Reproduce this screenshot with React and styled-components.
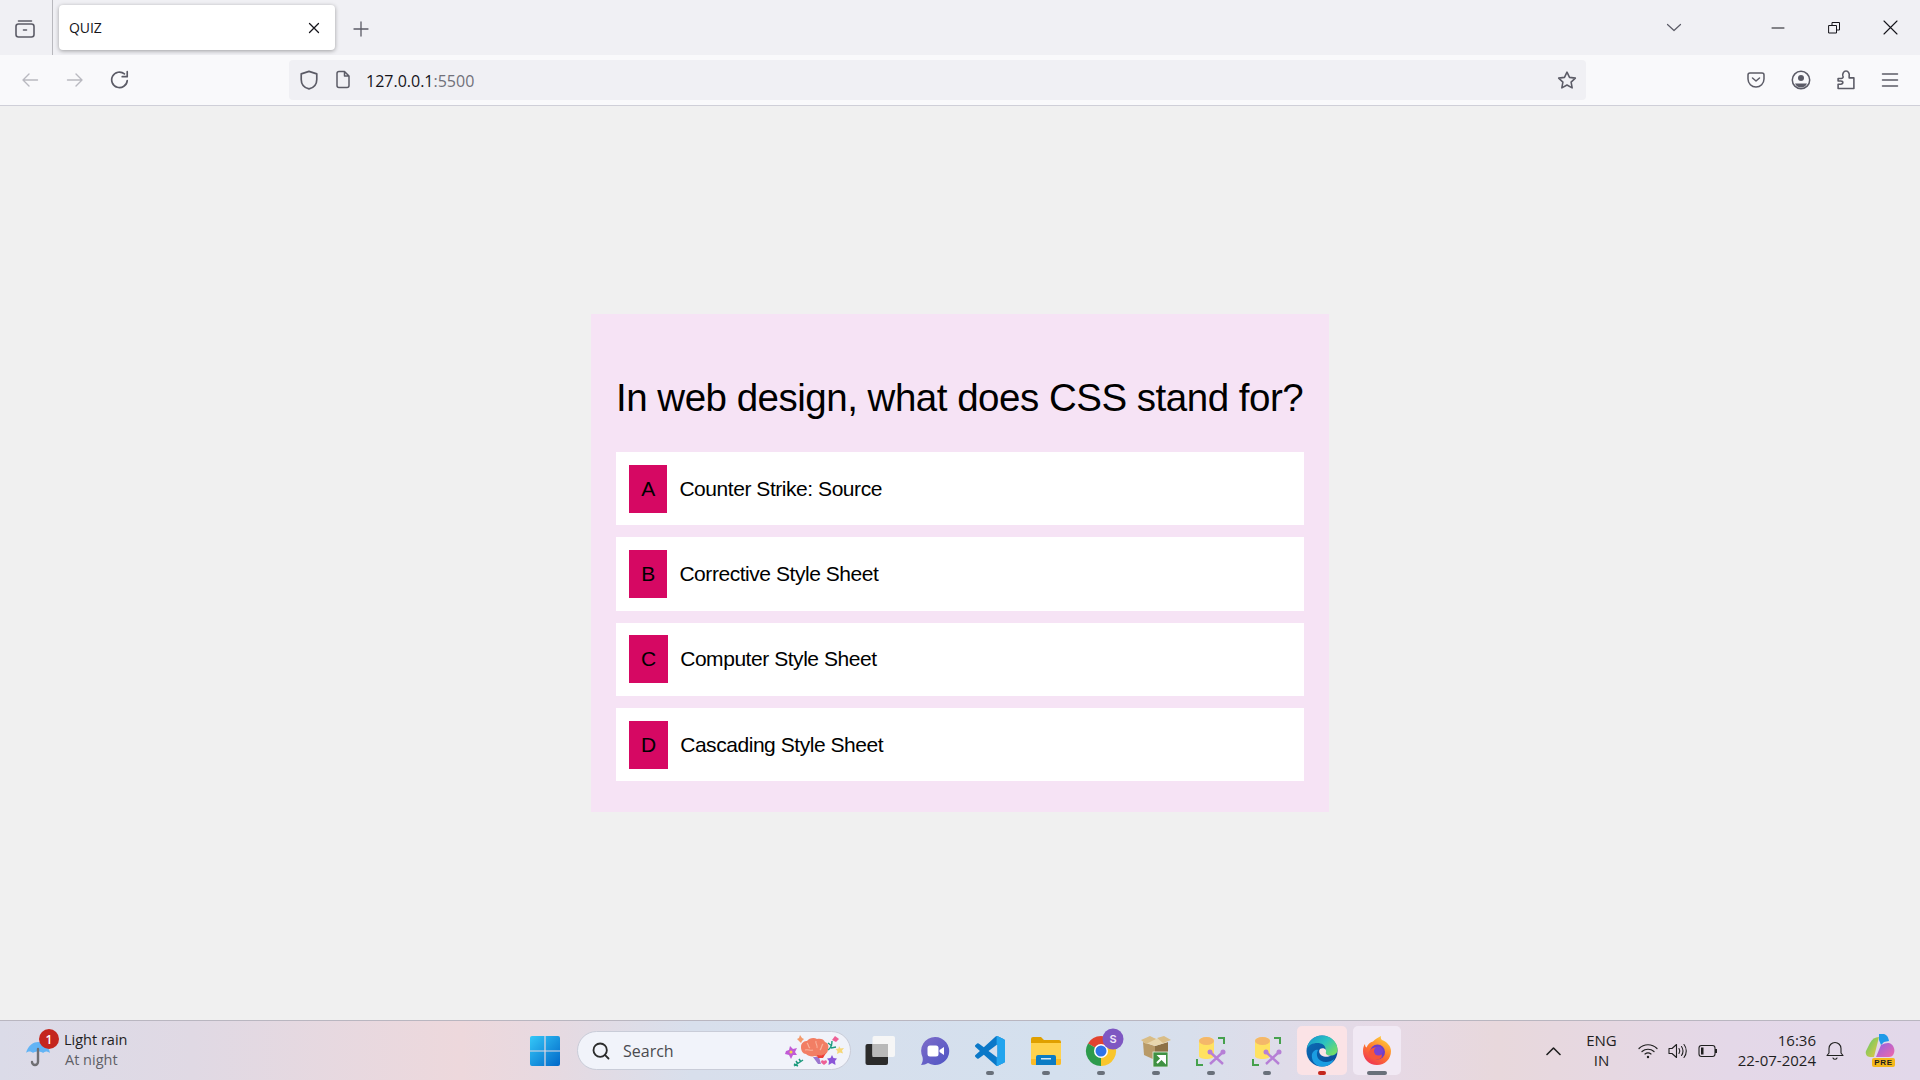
import React from "react";
import styled, { createGlobalStyle } from "styled-components";
import { Search as SearchIcon } from "lucide-react";

const GlobalStyle = createGlobalStyle`
  html, body { margin: 0; padding: 0; height: 100%; overflow: hidden; }
  body { font-family: "Liberation Sans", Arial, sans-serif; background: #f0f0f0; }
  #root { height: 100%; }
`;

const options = [
  { letter: "A", text: "Counter Strike: Source" },
  { letter: "B", text: "Corrective Style Sheet" },
  { letter: "C", text: "Computer Style Sheet" },
  { letter: "D", text: "Cascading Style Sheet" },
];

function Line({ d, w = 16, h = 16, vb = "0 0 16 16", color = "#5b5b66", sw = 1.4 }) {
  return (
    <svg width={w} height={h} viewBox={vb} fill="none" stroke={color} strokeWidth={sw} strokeLinecap="round" strokeLinejoin="round">
      <path d={d} />
    </svg>
  );
}

const WeatherIcon = () => (
  <svg width="26" height="32" viewBox="0 0 26 32">
    <path d="M1 17 C3 9 9 6 13 6 C18 6 24 10 25 17 C22 15 20 15 18 17 C16 15 10 15 8 17 C6 15 3 15 1 17Z" fill="#62b4f5" />
    <path d="M13 13v13a3 3 0 0 1-6 0" fill="none" stroke="#6f6f73" strokeWidth="2.4" strokeLinecap="round" />
  </svg>
);

const WinLogo = () => (
  <svg width="30" height="30" viewBox="0 0 30 30">
    <defs>
      <linearGradient id="winGrad" x1="0" y1="0" x2="1" y2="1">
        <stop offset="0" stopColor="#35c8f8" />
        <stop offset="1" stopColor="#0067c8" />
      </linearGradient>
    </defs>
    <path d="M0 2a2 2 0 0 1 2-2h12.4v14.4H0zM15.6 0H28a2 2 0 0 1 2 2v12.4H15.6zM0 15.6h14.4V30H2a2 2 0 0 1-2-2zM15.6 15.6H30V28a2 2 0 0 1-2 2H15.6z" fill="url(#winGrad)" />
  </svg>
);

const BrainArt = () => (
  <svg width="62" height="32" viewBox="0 0 62 32">
    <path d="M1 16l3-1 1-4 3 3 4-1-2 4 2 3-4 0-2 4-2-4-4-1z" fill="#c15ad6" />
    <circle cx="6" cy="17" r="1.500" fill="#f5d54a" />
    <path d="M9 31l9-6M11 26l2 3M14 24l2 3M9 29l4 2" stroke="#1c9a7d" strokeWidth="1.500" fill="none" />
    <path d="M12 4l2-1 1-3 2 3 2 1-2 2-1 2-2-2z" fill="#f39a6c" />
    <path d="M16 12c0-5 4-6 6-6 2-3 7-4 10-2 3-1 7 0 8 3 3 1 4 4 3 7 0 4-3 6-6 6-2 2-5 2-7 1-3 1-7 0-9-2-3 0-5-3-5-7z" fill="#f27e64" />
    <path d="M22 8c2 2 1 4 3 5M31 6c-1 3 2 4 1 7M38 9c-2 2-1 4-3 6M20 15c3-1 5 1 8 0" stroke="#f9b29c" strokeWidth="1.100" fill="none" />
    <path d="M28 22l6 0 2 7-3 0z" fill="#9c76cf" />
    <path d="M32 20c3 1 7 0 9-2l-3 5h-5z" fill="#ee3f37" />
    <path d="M43 15c3-2 4-5 4-9M47 11l-4-3M46 13l5-1" stroke="#1c9a7d" strokeWidth="1.400" fill="none" />
    <path d="M47 5l3-4 4 3-3 3z" fill="#ee5f95" />
    <path d="M54 11l1.500 2.500 3.500-.500-2 2.500 1 3-3-1-3 1.500.500-3-2-2 3-.500z" fill="#f6d776" />
    <path d="M47 20l1.500 3 3.500.500-2 2.500.500 4-3.500-2-3.500 2 .500-4-2-2.500 3.500-.500z" fill="#8a55d8" />
    <path d="M39 26c1-1 3-1 3 1 0 1-2 2-3 3-1-1-3-2-3-3 0-2 2-2 3-1z" fill="#ee5f95" />
  </svg>
);

const TaskViewIcon = () => (
  <svg width="30" height="29" viewBox="0 0 30 29">
    <rect x="0.500" y="8" width="22.500" height="21" rx="2" fill="#2b2b2b" />
    <rect x="7.500" y="0" width="22.500" height="21" rx="2" fill="#f6f6f6" />
    <rect x="7.500" y="8" width="15.500" height="13" fill="#b9b9b9" />
  </svg>
);

const ChatIcon = () => (
  <svg width="30" height="30" viewBox="0 0 30 30">
    <defs>
      <linearGradient id="chatGrad" x1="0" y1="0" x2="1" y2="1">
        <stop offset="0" stopColor="#7e6cc9" />
        <stop offset="1" stopColor="#4f55c4" />
      </linearGradient>
    </defs>
    <path d="M15 1a14 14 0 1 1-7 26c-2 1-4 2-7 2 2-3 2-6 1.5-8A14 14 0 0 1 15 1z" fill="url(#chatGrad)" />
    <rect x="7.500" y="9.500" width="11" height="11" rx="2.500" fill="#fff" />
    <path d="M19.500 14l4.500-3v8l-4.500-3z" fill="#fff" />
  </svg>
);

const VSCODE_PATH = "M96.461 10.796L75.857.876a6.23 6.23 0 0 0-7.107 1.207L29.484 37.884 12.37 24.9a4.16 4.16 0 0 0-5.318.237l-5.5 5a4.17 4.17 0 0 0-.004 6.167L16.4 50 1.546 63.696a4.17 4.17 0 0 0 .004 6.167l5.5 5a4.16 4.16 0 0 0 5.318.237l17.113-12.984 39.27 35.8a6.22 6.22 0 0 0 7.106 1.208l20.604-9.92A6.25 6.25 0 0 0 100 83.37V16.63a6.25 6.25 0 0 0-3.539-5.833zM75.015 72.7L45.11 50l29.905-22.7z";

const VsCodeIcon = () => (
  <svg width="30" height="30" viewBox="0 0 100 100">
    <defs>
      <clipPath id="vsPanel">
        <rect x="72" y="0" width="28" height="100" />
      </clipPath>
    </defs>
    <path d={VSCODE_PATH} fill="#0a78c8" />
    <path d={VSCODE_PATH} fill="#22a4ee" clipPath="url(#vsPanel)" />
  </svg>
);

const FolderIcon = () => (
  <svg width="30" height="28" viewBox="0 0 30 28">
    <path d="M0 2a2 2 0 0 1 2-2h8l3 3h15a2 2 0 0 1 2 2v6H0z" fill="#e0a000" />
    <path d="M0 6h30v20a2 2 0 0 1-2 2H2a2 2 0 0 1-2-2z" fill="#ffd24d" />
    <path d="M0 22h30v4a2 2 0 0 1-2 2H2a2 2 0 0 1-2-2z" fill="#fcbb25" />
    <path d="M5 20a2 2 0 0 1 2-2h16a2 2 0 0 1 2 2v8H5z" fill="#0c7cc4" />
    <rect x="10" y="21" width="10" height="1.500" fill="#d4e7f5" />
  </svg>
);

const ChromeIcon = () => (
  <svg width="46" height="46" viewBox="-8 0 46 46">
    <path d="M15 23L2 15.500A15 15 0 0 1 28 15.500z" fill="#e2432f" />
    <path d="M15 23L28 15.500A15 15 0 0 1 15 38z" fill="#f9c62c" />
    <path d="M15 23L15 38A15 15 0 0 1 2 15.500z" fill="#2d9b4c" />
    <circle cx="15" cy="23" r="7" fill="#fff" />
    <circle cx="15" cy="23" r="5.500" fill="#2f74e8" />
    <circle cx="27" cy="11" r="10.500" fill="#7e57c2" />
    <text x="27" y="15" textAnchor="middle" fontSize="11" fontFamily="Inter, sans-serif" fontWeight="600" fill="#efe6fa">S</text>
  </svg>
);

const BoxIcon = () => (
  <svg width="30" height="32" viewBox="0 0 30 32">
    <path d="M2 7l12 4v14L3 20z" fill="#b89a68" />
    <path d="M14 11l13-4v13l-13 5z" fill="#8d7145" />
    <path d="M2 7l11-4 14 4-13 4z" fill="#e9d7ad" />
    <path d="M0 5l9-4 6 3-10 5zM16 3l7-2 7 4-8 3z" fill="#d9bd86" />
    <rect x="12" y="17" width="15" height="15" fill="#3f9142" stroke="#e8efe4" strokeWidth="0.800" />
    <path d="M16 28l5-5M18 21h6v6z" stroke="#fff" strokeWidth="2" fill="#fff" />
  </svg>
);

const DbToolIcon = () => (
  <svg width="30" height="30" viewBox="0 0 30 30">
    <path d="M3 5c0-5 15-5 15 0v15c0 4-15 4-15 0z" fill="#ffe261" />
    <ellipse cx="10.500" cy="5" rx="7.500" ry="4" fill="#f4b76a" />
    <path d="M22 2h6v6M1 23v6h6" stroke="#45a14d" strokeWidth="2" fill="none" />
    <path d="M14 16l13 12M27 16L14 28" stroke="#b67fd6" strokeWidth="2.400" fill="none" />
    <circle cx="14" cy="16" r="2.500" fill="#b67fd6" />
    <circle cx="27" cy="16" r="2.500" fill="#b67fd6" />
  </svg>
);

const EdgeIcon = () => (
  <svg width="32" height="32" viewBox="0 0 32 32">
    <defs>
      <linearGradient id="edgeTop" x1="0" y1="0" x2="1" y2="0.700">
        <stop offset="0" stopColor="#1390d0" />
        <stop offset="0.550" stopColor="#2cc3c0" />
        <stop offset="1" stopColor="#6fdc6a" />
      </linearGradient>
      <linearGradient id="edgeLow" x1="0" y1="0" x2="1" y2="1">
        <stop offset="0" stopColor="#0c6fb8" />
        <stop offset="1" stopColor="#0a4a96" />
      </linearGradient>
    </defs>
    <circle cx="16" cy="16" r="15.500" fill="url(#edgeLow)" />
    <path d="M1 14C2 6 8 .500 16 .500c9 0 15.500 7 15.500 14 0 4-3 6-7 6-3 0-6-1-6-3 0-1 1-1.500 1-3.500 0-4-4-6-8-6-5 0-9 2-10.500 6z" fill="url(#edgeTop)" />
    <path d="M12 15c-3 5 0 12 8 12 3 0 6-1 8-3-2 6-8 7.500-12 7.500C8 31.500 5 24 6 19c1-3 4-5 6-4z" fill="#1b9de2" />
    <path d="M14 14c3-2 7 0 6 3-1 2 2 4 5 3.500-3 2-7 1.500-9.500 0-2.500-2-3-4.500-1.500-6.500z" fill="#fbe3e6" />
  </svg>
);

const FirefoxIcon = () => (
  <svg width="30" height="30" viewBox="0 0 30 30">
    <defs>
      <linearGradient id="foxGrad" x1="0.800" y1="0" x2="0.200" y2="1">
        <stop offset="0" stopColor="#ffd53c" />
        <stop offset="0.500" stopColor="#ff7a2c" />
        <stop offset="1" stopColor="#ee2f55" />
      </linearGradient>
    </defs>
    <path d="M15 29C7 29 1 23 1 15c0-3 .800-5.500 2-7 0 2 .500 3 1.500 3.500C6 8 8 6 11 5.500 13 3 17 1 19 0c-.500 2 0 3 1 4 5 2 9 6 9 11 0 8-6 14-14 14z" fill="url(#foxGrad)" />
    <circle cx="15.500" cy="16" r="7.500" fill="#6f3fc4" />
    <path d="M8 14c3-3 7-3.500 9-1.500-2 0-3 1-3 2 4 .500 7 3 5.500 7-3 3-8 2.500-11 .500C6 19 6 16 8 14z" fill="#f5553b" />
    <circle cx="16.500" cy="15" r="4.500" fill="#7a44cf" />
  </svg>
);

const CopilotIcon = () => (
  <svg width="30" height="28" viewBox="0 0 30 28">
    <defs>
      <linearGradient id="copGreen" x1="0" y1="0" x2="1" y2="1">
        <stop offset="0" stopColor="#56c96a" />
        <stop offset="1" stopColor="#f0c93f" />
      </linearGradient>
      <linearGradient id="copPink" x1="0" y1="0" x2="1" y2="1">
        <stop offset="0" stopColor="#8f63e6" />
        <stop offset="1" stopColor="#f268a8" />
      </linearGradient>
    </defs>
    <path d="M5 9c2-4 5-6 9-6l-5 20H5c-3 0-5-3-4-6z" fill="url(#copGreen)" />
    <path d="M14 0h4c3 0 5 2 6 7l-5 1-3 3-2-5z" fill="#1f9ae8" />
    <path d="M16 11c4-2 8-3 10-1 3 2 4 6 3 9-1 3-3 4-5 4H11z" fill="url(#copPink)" />
  </svg>
);

export default function App() {
  return (
    <>
      <GlobalStyle />
      <Screen>
        <TabStrip>
          <TabListButton>
            <svg width="20" height="20" viewBox="0 0 20 20" fill="none" stroke="#5b5b66" strokeWidth="1.600" strokeLinecap="round" strokeLinejoin="round">
              <rect x="1" y="5" width="18" height="13" rx="2.500" />
              <path d="M3.500 2h13M8.500 11h3" />
            </svg>
          </TabListButton>
          <Tab>
            <TabTitle>QUIZ</TabTitle>
            <Line d="M3.500 3.500l9 9M12.500 3.500l-9 9" color="#15141a" sw={1.300} />
          </Tab>
          <NewTab>
            <Line d="M8 1v14M1 8h14" w={16} h={16} sw={1.300} />
          </NewTab>
          <StripRight>
            <Line d="M1 1.500l6.500 6 6.500-6" w={16} h={10} vb="0 0 15 10" color="#5b5b66" sw={1.200} />
            <WindowButtons>
              <WindowButton>
                <Line d="M1 6h12" w={14} h={12} vb="0 0 14 12" color="#15141a" sw={1} />
              </WindowButton>
              <WindowButton>
                <Line d="M1 4.500h7.500V12H1zM4 4.500V1.500h7.500V9H8.500" w={13} h={13} vb="0 0 13 13" color="#15141a" sw={1} />
              </WindowButton>
              <WindowButton>
                <Line d="M1 1l13 13M14 1L1 14" w={15} h={15} vb="0 0 15 15" color="#15141a" sw={1.100} />
              </WindowButton>
            </WindowButtons>
          </StripRight>
        </TabStrip>

        <NavBar>
          <NavButtons>
            <Line d="M16.500 9H2M8 3L2 9l6 6" w={20} h={18} vb="0 0 18 18" color="#b9b9c0" sw={1.400} />
            <Line d="M1.500 9H16M10 3l6 6-6 6" w={20} h={18} vb="0 0 18 18" color="#b9b9c0" sw={1.400} />
            <Line d="M15.500 9.500A7 7 0 1 1 13 3.500M15.500 1.500v4.500H11" w={20} h={20} vb="0 0 18 18" sw={1.500} />
          </NavButtons>
          <UrlBar>
            <Line d="M9 1.200l7 2.300v5c0 4.500-3 7.500-7 8.500-4-1-7-4-7-8.500v-5z" w={20} h={20} vb="0 0 18 18" sw={1.500} />
            <Line d="M3 3a2 2 0 0 1 2-2h5.500L15 5.500V15a2 2 0 0 1-2 2H5a2 2 0 0 1-2-2zM10.500 1v4.500H15" w={18} h={19} vb="0 0 18 18" sw={1.500} />
            <UrlText>127.0.0.1<UrlPort>:5500</UrlPort></UrlText>
            <Line d="M9.500 1.500l2.400 5 5.500.700-4 3.800 1 5.500-4.900-2.700-4.900 2.700 1-5.500-4-3.800 5.500-.700z" w={20} h={20} vb="0 0 19 18" sw={1.500} />
          </UrlBar>
          <NavTools>
            <svg width="18" height="18" viewBox="0 0 18 18" fill="none" stroke="#5b5b66" strokeWidth="1.500" strokeLinecap="round" strokeLinejoin="round">
              <path d="M1 4a2 2 0 0 1 2-2h12a2 2 0 0 1 2 2v4a8 8 0 0 1-16 0zM5.500 7L9 10l3.500-3" />
            </svg>
            <svg width="20" height="20" viewBox="0 0 20 20" fill="none" stroke="#5b5b66" strokeWidth="1.500">
              <circle cx="10" cy="10" r="8.700" />
              <circle cx="10" cy="8" r="3" fill="#5b5b66" stroke="none" />
              <path d="M4 13.500h12c-1 2.500-3.500 4-6 4s-5-1.500-6-4z" fill="#5b5b66" stroke="none" />
            </svg>
            <Line d="M1 8h3c2 0 2-1.500 1.500-2.500C5 4 6 1 8.500 1S12 4 11.500 5.500V7.500H16v10H1v-4h2.500c1.500 0 2-1 2-1.800S5 10.500 3.500 10.500H1z" w={18} h={20} vb="0 0 17 19" sw={1.500} />
            <Line d="M1 3h15M1 9h15M1 15h15" w={18} h={18} vb="0 0 17 18" sw={1.500} />
          </NavTools>
        </NavBar>

        <Page>
          <Card>
            <Question>In web design, what does CSS stand for?</Question>
            <OptionList>
              {options.map((o) => (
                <Option key={o.letter}>
                  <Letter>{o.letter}</Letter>
                  <OptionText>{o.text}</OptionText>
                </Option>
              ))}
            </OptionList>
          </Card>
        </Page>

        <Taskbar>
          <Weather>
            <WeatherGlyph>
              <WeatherIcon />
              <Badge>1</Badge>
            </WeatherGlyph>
            <WeatherText>
              <WeatherTitle>Light rain</WeatherTitle>
              <WeatherSub>At night</WeatherSub>
            </WeatherText>
          </Weather>

          <Center>
            <StartSlot><WinLogo /></StartSlot>
            <SearchBox>
              <SearchIcon size={20} color="#2b2b2b" strokeWidth={2.200} />
              <SearchLabel>Search</SearchLabel>
              <BrainArt />
            </SearchBox>
            <TaskSlot><TaskViewIcon /></TaskSlot>
            <TaskSlot><ChatIcon /></TaskSlot>
            <TaskSlot $dot="app"><VsCodeIcon /></TaskSlot>
            <TaskSlot $dot="app"><FolderIcon /></TaskSlot>
            <TaskSlot $dot="app"><ChromeIcon /></TaskSlot>
            <TaskSlot $dot="app"><BoxIcon /></TaskSlot>
            <TaskSlot $dot="app"><DbToolIcon /></TaskSlot>
            <TaskSlot $dot="app"><DbToolIcon /></TaskSlot>
            <PinnedSlot $w={50} $dot="edge" $bg="#fbe3e6"><EdgeIcon /></PinnedSlot>
            <PinnedSlot $w={48} $dot="active" $bg="#f1e9f4"><FirefoxIcon /></PinnedSlot>
          </Center>

          <Tray>
            <Line d="M1 8l6.500-6.500L14 8" w={15} h={10} vb="0 0 15 9" color="#1f1f1f" sw={1.600} />
            <Lang><span>ENG</span><span>IN</span></Lang>
            <TrayIcons>
              <svg width="20" height="16" viewBox="0 0 20 16" fill="none" stroke="#1f1f1f" strokeWidth="1.200" strokeLinecap="round">
                <path d="M1 5.500c5-5 13-5 18 0M4 8.500c3.500-3 8.500-3 12 0M7 11c2-1.500 4-1.500 6 0" />
                <circle cx="10" cy="14" r="1.200" fill="#1f1f1f" stroke="none" />
              </svg>
              <svg width="20" height="16" viewBox="0 0 20 16" fill="none" stroke="#1f1f1f" strokeWidth="1.100" strokeLinecap="round" strokeLinejoin="round">
                <path d="M1 5.500h3L8.500 1.500v13L4 10.500H1zM11 5.500c1 1.500 1 3.500 0 5M13.500 3.500c2 2.500 2 6.500 0 9M16 1.500c3 3.500 3 9.500 0 13" />
              </svg>
              <svg width="20" height="14" viewBox="0 0 20 14" fill="none" stroke="#1f1f1f" strokeWidth="1.100">
                <rect x="1" y="1.500" width="16" height="11" rx="2.500" />
                <rect x="3" y="3.500" width="2.500" height="7" fill="#1f1f1f" stroke="none" />
                <path d="M18 5v4" strokeWidth="2" />
              </svg>
            </TrayIcons>
            <Clock><span>16:36</span><span>22-07-2024</span></Clock>
            <Bell>
              <Line d="M3 11.500V7a6 6 0 0 1 12 0v4.500l2 2.500H1zM7 16.500a2.200 2.200 0 0 0 4 0" w={18} h={19} vb="0 0 18 18" color="#1f1f1f" sw={1.100} />
            </Bell>
            <CopilotWrap>
              <CopilotIcon />
              <PreTag>PRE</PreTag>
            </CopilotWrap>
          </Tray>
        </Taskbar>
      </Screen>
    </>
  );
}

const Screen = styled.div`
  height: 1080px;
  width: 1920px;
  display: flex;
  flex-direction: column;
  background: #f0f0f0;
`;

const TabStrip = styled.div`
  height: 55px;
  background: #f0f0f4;
  display: flex;
  align-items: center;
  flex-shrink: 0;
`;

const TabListButton = styled.div`
  width: 53px;
  height: 55px;
  box-sizing: border-box;
  border-right: 1px solid #b8b8bd;
  display: flex;
  align-items: center;
  justify-content: center;
  padding-top: 2px;
  padding-right: 2px;
`;

const Tab = styled.div`
  width: 276px;
  height: 45px;
  margin-left: 6px;
  background: #fff;
  border-radius: 4px;
  box-shadow: 0 1px 4px rgba(0, 0, 0, 0.35);
  display: flex;
  align-items: center;
  justify-content: space-between;
  padding: 0 13px 0 10px;
  box-sizing: border-box;
`;

const TabTitle = styled.span`
  font-family: "Open Sans", sans-serif;
  font-size: 14px;
  letter-spacing: -0.1px;
  color: #15141a;
`;

const NewTab = styled.div`
  width: 52px;
  display: flex;
  justify-content: center;
  padding-top: 2px;
`;

const StripRight = styled.div`
  flex: 1;
  display: flex;
  justify-content: flex-end;
  align-items: center;
`;

const WindowButtons = styled.div`
  display: flex;
  align-items: center;
  margin-left: 68px;
  margin-right: 1px;
`;

const WindowButton = styled.div`
  width: 56.500px;
  display: flex;
  justify-content: center;
`;

const NavBar = styled.div`
  height: 51px;
  box-sizing: border-box;
  background: #f9f9fb;
  border-bottom: 1px solid #cfcfd8;
  display: flex;
  align-items: center;
  flex-shrink: 0;
  padding-bottom: 1px;
`;

const NavButtons = styled.div`
  width: 289px;
  display: flex;
  gap: 25px;
  padding-left: 20px;
  box-sizing: border-box;
  align-items: center;
`;

const UrlBar = styled.div`
  width: 1297px;
  height: 40px;
  box-sizing: border-box;
  background: #f0f0f4;
  border-radius: 4px;
  display: flex;
  align-items: center;
  gap: 15px;
  padding: 0 9px 0 10px;
`;

const UrlText = styled.div`
  flex: 1;
  font-family: "Open Sans", sans-serif;
  font-size: 16px;
  color: #15141a;
  padding-top: 3px;
  margin-left: -1px;
`;

const UrlPort = styled.span`
  color: #71717a;
`;

const NavTools = styled.div`
  flex: 1;
  display: flex;
  justify-content: flex-end;
  align-items: center;
  gap: 26px;
  padding-right: 21px;
`;

const Page = styled.main`
  flex: 1;
  display: flex;
  justify-content: center;
  padding-top: 208px;
  box-sizing: border-box;
`;

const Card = styled.section`
  width: 738px;
  height: 498px;
  box-sizing: border-box;
  background: #f6e3f5;
  padding: 61px 25px 0;
`;

const Question = styled.h1`
  margin: 0;
  font-weight: 400;
  font-size: 38.500px;
  letter-spacing: -0.490px;
  line-height: 46px;
  color: #000;
  white-space: nowrap;
`;

const OptionList = styled.div`
  margin-top: 31px;
  display: flex;
  flex-direction: column;
  gap: 12px;
`;

const Option = styled.div`
  height: 73.330px;
  box-sizing: border-box;
  background: #fff;
  display: flex;
  align-items: center;
  padding-left: 13px;
  gap: 12px;
`;

const Letter = styled.span`
  height: 48px;
  min-width: 14.400px;
  padding: 0 12px;
  background: #d60863;
  display: flex;
  align-items: center;
  justify-content: center;
  font-size: 21px;
  color: #000;
`;

const OptionText = styled.span`
  font-size: 21px;
  letter-spacing: -0.450px;
  color: #000;
`;

const Taskbar = styled.footer`
  height: 60px;
  box-sizing: border-box;
  border-top: 1px solid #b9b6c0;
  background: linear-gradient(90deg, #dbdbe8 0%, #e0d9e4 10%, #edd8dc 24%, #e8d9e0 28%, #d8dfec 36%, #d4e0ee 55%, #d8dfec 62%, #e6d9e6 72%, #e8d8dc 78%, #e4d8e8 90%, #e2d8ea 100%);
  display: flex;
  align-items: center;
  flex-shrink: 0;
`;

const Weather = styled.div`
  display: flex;
  align-items: center;
  width: 522px;
  padding-left: 25px;
  box-sizing: border-box;
  gap: 13px;
`;

const WeatherGlyph = styled.div`
  position: relative;
  display: flex;
  margin-top: 3px;
`;

const Badge = styled.span`
  position: absolute;
  top: -7px;
  right: -8px;
  width: 20px;
  height: 20px;
  border-radius: 50%;
  background: #c4261d;
  color: #fff;
  font-family: "Open Sans", sans-serif;
  font-size: 12px;
  font-weight: 600;
  display: flex;
  align-items: center;
  justify-content: center;
`;

const WeatherText = styled.div`
  display: flex;
  flex-direction: column;
  font-family: "Open Sans", sans-serif;
  font-size: 14.500px;
  line-height: 20px;
  padding-bottom: 2px;
`;

const WeatherTitle = styled.span`
  color: #1f1f1f;
`;

const WeatherSub = styled.span`
  color: #5f5f66;
  padding-left: 1px;
`;

const Center = styled.div`
  display: flex;
  align-items: center;
  height: 100%;
`;

const StartSlot = styled.div`
  width: 46px;
  height: 48px;
  display: flex;
  align-items: center;
  justify-content: center;
`;

const dotColors = { app: "#69707a", edge: "#c4261d", active: "#69707a" };

const TaskSlot = styled.div`
  width: 55.300px;
  height: 48px;
  display: flex;
  align-items: center;
  justify-content: center;
  position: relative;
  &::after {
    content: "";
    display: ${(p) => (p.$dot ? "block" : "none")};
    position: absolute;
    bottom: 0;
    left: 50%;
    transform: translateX(-50%);
    height: 4px;
    border-radius: 2px;
    width: ${(p) => (p.$dot === "active" ? "20px" : "8px")};
    background: ${(p) => dotColors[p.$dot]};
  }
`;

const PinnedSlot = styled(TaskSlot)`
  width: ${(p) => p.$w}px;
  height: 49px;
  margin-left: 3px;
  margin-right: 3px;
  border-radius: 5px;
  background: ${(p) => p.$bg};
`;

const SearchBox = styled.div`
  width: 274px;
  height: 39px;
  margin-left: 9px;
  margin-right: 1px;
  box-sizing: border-box;
  border: 1px solid #c9ccd8;
  border-radius: 20px;
  background: #f1f3fa;
  display: flex;
  align-items: center;
  padding: 0 3px 0 13px;
`;

const SearchLabel = styled.span`
  flex: 1;
  margin-left: 12px;
  font-family: "Open Sans", sans-serif;
  font-size: 16px;
  color: #4a4a4f;
`;

const Tray = styled.div`
  flex: 1;
  display: flex;
  justify-content: flex-end;
  align-items: center;
  padding-right: 25px;
  color: #1f1f1f;
  font-family: "Open Sans", sans-serif;
  font-size: 15px;
`;

const Lang = styled.div`
  display: flex;
  flex-direction: column;
  align-items: center;
  line-height: 20px;
  margin-left: 25px;
  padding-bottom: 2px;
`;

const TrayIcons = styled.div`
  display: flex;
  align-items: center;
  gap: 10px;
  margin-left: 21px;
`;

const Clock = styled.div`
  display: flex;
  flex-direction: column;
  align-items: flex-end;
  line-height: 20px;
  margin-left: 20px;
  padding-bottom: 2px;
`;

const Bell = styled.div`
  display: flex;
  margin-left: 10px;
`;

const CopilotWrap = styled.div`
  position: relative;
  margin-left: 21px;
  padding-bottom: 5px;
  display: flex;
`;

const PreTag = styled.span`
  position: absolute;
  right: 0;
  bottom: 0;
  background: #f5b81c;
  border-radius: 2px;
  font-family: "Liberation Sans", sans-serif;
  font-size: 8px;
  font-weight: 700;
  line-height: 9px;
  letter-spacing: 0.8px;
  padding: 0 2px;
  color: #1c1c1c;
`;
